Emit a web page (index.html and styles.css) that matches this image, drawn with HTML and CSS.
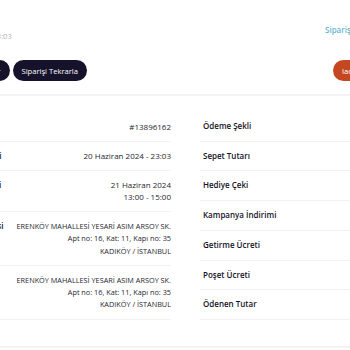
FILE: index.html
```html
<!DOCTYPE html>
<html lang="tr">
<head>
  <meta charset="UTF-8">
  <title>Sipariş Detayı</title>
  <link rel="stylesheet" href="styles.css">
</head>
<body>
  <div class="page">
    <div class="head">
      <div class="head-left">
        <h2 class="title">Sipariş</h2>
        <div class="date">20.06.2024 - 23:03</div>
      </div>
      <a class="back-link" href="#">Siparişlerim</a>
    </div>

    <div class="actions">
      <div class="btn-group">
        <button class="btn btn-dark">Değerlendir</button>
        <button class="btn btn-dark">Siparişi Tekrarla</button>
      </div>
      <button class="btn btn-orange">Iade Talebi</button>
    </div>

    <div class="details">
      <div class="col-left">
        <div class="row">
          <span class="label">Sipariş No</span>
          <span class="value">#13896162</span>
        </div>
        <div class="row">
          <span class="label">Siparişin Tarihi</span>
          <span class="value">20 Haziran 2024 - 23:03</span>
        </div>
        <div class="row">
          <span class="label">Teslimat Tarihi</span>
          <span class="value">21 Haziran 2024<br>13:00 - 15:00</span>
        </div>
        <div class="row">
          <span class="label">Teslimat Adresi</span>
          <span class="value address">ERENKÖY MAHALLESİ YESARİ ASIM ARSOY SK.<br>Apt no: 16, Kat: 11, Kapı no: 35<br>KADIKÖY / İSTANBUL</span>
        </div>
        <div class="row">
          <span class="label">Fatura Adresi</span>
          <span class="value address">ERENKÖY MAHALLESİ YESARİ ASIM ARSOY SK.<br>Apt no: 16, Kat: 11, Kapı no: 35<br>KADIKÖY / İSTANBUL</span>
        </div>
      </div>

      <div class="col-right">
        <div class="row"><span class="label">Ödeme Şekli</span><span class="value">Kredi Kartı</span></div>
        <div class="row"><span class="label">Sepet Tutarı</span><span class="value">412,50 TL</span></div>
        <div class="row"><span class="label">Hediye Çeki</span><span class="value">0,00 TL</span></div>
        <div class="row"><span class="label">Kampanya İndirimi</span><span class="value">0,00 TL</span></div>
        <div class="row"><span class="label">Getirme Ücreti</span><span class="value">0,00 TL</span></div>
        <div class="row"><span class="label">Poşet Ücreti</span><span class="value">0,50 TL</span></div>
        <div class="row"><span class="label">Ödenen Tutar</span><span class="value">413,00 TL</span></div>
      </div>
    </div>
  </div>
</body>
</html>
```

FILE: styles.css
```css
body {
  margin: 0;
  overflow: hidden;
  background-color: #ffffff;
  font-family: 'Open Sans', 'Noto Sans', sans-serif;
  color: #222;
}

.page {
  margin-left: -56px;
  width: 700px;
}

.head {
  display: flex;
  align-items: flex-start;
  padding-top: 12px;
}

.head-left {
  width: 377px;
  padding-left: 4px;
}

.title {
  margin: 0;
  font-size: 12px;
  line-height: 18px;
  color: #15122b;
}

.date {
  font-size: 7.5px;
  line-height: 12px;
  color: #b4b4bc;
}

.back-link {
  margin-top: 12px;
  font-size: 8px;
  line-height: 12px;
  font-weight: 600;
  color: #6ab5d2;
  text-decoration: none;
}

.actions {
  display: flex;
  align-items: center;
  padding: 18px 0 13px;
  border-bottom: 2px solid #f3f3f6;
}

.btn-group {
  display: flex;
  justify-content: flex-end;
  gap: 3px;
  width: 143px;
  margin-right: 246px;
}

.btn {
  flex-shrink: 0;
  height: 21px;
  padding: 0 9px;
  border: none;
  border-radius: 11px;
  color: #ffffff;
  font-family: inherit;
  font-size: 7.6px;
  font-weight: 500;
  white-space: nowrap;
}

.btn-dark {
  background-color: #16122b;
}

.btn-orange {
  background-color: #c5471f;
}

.details {
  display: flex;
  gap: 29px;
  padding: 16px 0 26px;
  border-bottom: 2px solid #f3f3f6;
}

.col-left {
  width: 227px;
}

.col-right {
  width: 300px;
}

.row {
  display: flex;
  justify-content: space-between;
  align-items: flex-start;
  padding: 8px 0;
  border-bottom: 1px solid #f2f2f5;
  font-size: 8px;
  line-height: 12px;
}

.col-right .row {
  padding-left: 3px;
  line-height: 12.7px;
}

.label {
  flex-shrink: 0;
  font-weight: 600;
  color: #141226;
  white-space: nowrap;
}

.value {
  flex-shrink: 0;
  text-align: right;
  color: #26262e;
  white-space: nowrap;
}

.address {
  font-size: 7.3px;
  line-height: 12.3px;
}

.col-left .row:nth-child(1) {
  padding-top: 9px;
}
```
